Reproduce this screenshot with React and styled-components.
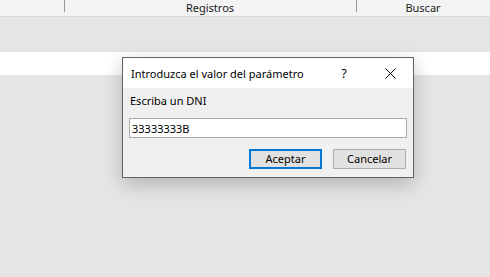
import React from 'react';
import styled, { createGlobalStyle } from 'styled-components';

const GlobalStyle = createGlobalStyle`
  html, body {
    margin: 0;
    padding: 0;
    background-color: #e5e5e5;
    font-family: 'Segoe UI', 'Noto Sans', sans-serif;
    font-size: 11px;
    color: #000;
  }
`;

const Page = styled.div`
  position: relative;
  width: 490px;
  height: 277px;
  overflow: hidden;
  background-color: #e5e5e5;
`;

const Header = styled.div`
  display: flex;
  height: 16px;
  background-color: #f3f3f3;
  border-bottom: 1px solid #d9d9d9;
`;

const HeaderCell = styled.div`
  position: relative;
  width: ${props => props.width}px;
  display: flex;
  justify-content: center;
  align-items: center;
  line-height: 14px;
  color: #1a1a1a;

  ${props => props.divider && `
    &::before {
      content: '';
      position: absolute;
      left: 0;
      top: 0;
      width: 1px;
      height: 12px;
      background-color: #9a9a9a;
    }
  `}
`;

const Band = styled.div`
  height: ${props => props.height}px;
  background-color: ${props => props.white ? '#ffffff' : '#e5e5e5'};
`;

const Dialog = styled.div`
  position: absolute;
  left: 122px;
  top: 57px;
  width: 290px;
  border: 1px solid #636363;
  background-color: #f0f0f0;
  box-shadow: 0 6px 18px rgba(0, 0, 0, 0.22);
  display: flex;
  flex-direction: column;
`;

const TitleBar = styled.div`
  display: flex;
  align-items: center;
  height: 30px;
  background-color: #ffffff;
  padding-left: 8px;
`;

const Title = styled.div`
  flex: 1;
  white-space: nowrap;
  font-size: 11px;
`;

const HelpButton = styled.div`
  width: 46px;
  text-align: center;
  font-size: 12px;
`;

const CloseButton = styled.div`
  width: 46px;
  height: 30px;
  display: flex;
  align-items: center;
  justify-content: center;
`;

const Body = styled.div`
  display: flex;
  flex-direction: column;
  padding: 5px 6px 8px 6px;
`;

const Label = styled.div`
  line-height: 16px;
  padding-left: 1px;
`;

const Input = styled.input`
  margin-top: 9px;
  height: 20px;
  box-sizing: border-box;
  border: 1px solid #acacac;
  background-color: #ffffff;
  padding: 0 2px;
  font-family: inherit;
  font-size: 11px;
  outline: none;
`;

const Buttons = styled.div`
  display: flex;
  justify-content: flex-end;
  gap: 11px;
  margin-top: 11px;
  padding-right: 1px;
`;

const Button = styled.button`
  width: 73px;
  height: 20px;
  box-sizing: border-box;
  background-color: #e1e1e1;
  border: ${props => props.primary ? '2px solid #0078d7' : '1px solid #adadad'};
  font-family: inherit;
  font-size: 11px;
  color: #000;
  padding: 0;
  line-height: 16px;
`;

export default function App() {
  return (
    <Page>
      <GlobalStyle />
      <Header>
        <HeaderCell width={64} />
        <HeaderCell width={292} divider>Registros</HeaderCell>
        <HeaderCell width={134} divider>Buscar</HeaderCell>
      </Header>
      <Band height={35} />
      <Band height={23} white />
      <Dialog>
        <TitleBar>
          <Title>Introduzca el valor del parámetro</Title>
          <HelpButton>?</HelpButton>
          <CloseButton>
            <svg width="11" height="11" viewBox="0 0 11 11">
              <path d="M0.5 0.5 L10.5 10.5 M10.5 0.5 L0.5 10.5" stroke="#000" strokeWidth="1" fill="none" />
            </svg>
          </CloseButton>
        </TitleBar>
        <Body>
          <Label>Escriba un DNI</Label>
          <Input defaultValue="33333333B" />
          <Buttons>
            <Button primary>Aceptar</Button>
            <Button>Cancelar</Button>
          </Buttons>
        </Body>
      </Dialog>
    </Page>
  );
}
